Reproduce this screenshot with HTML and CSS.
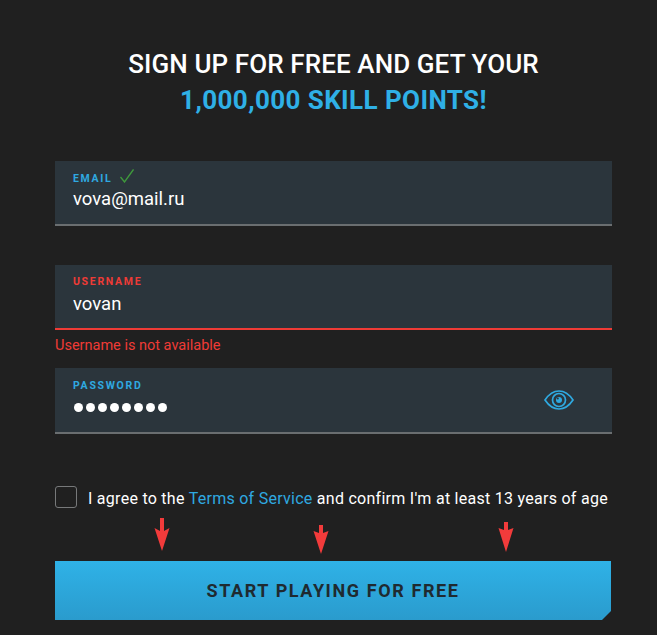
FILE: index.html
```html
<!DOCTYPE html>
<html>

<head>
    <meta name="viewport" content="width=device-width, initial-scale=1.0">
    <link rel="stylesheet" href="styles.css">
</head>

<body>
    <div class="signup">
        <h1 class="title">SIGN UP FOR FREE AND GET YOUR<br><span class="points">1,000,000 SKILL POINTS!</span></h1>

        <div class="field email">
            <div class="label">EMAIL
                <svg class="check" width="14" height="14" viewBox="0 0 14 14">
                    <path d="M.5 8L4.500 13L13.500 .5" fill="none" stroke="#3f9a3c" stroke-width="1.300" />
                </svg>
            </div>
            <div class="value">vova@mail.ru</div>
        </div>

        <div class="field username error">
            <div class="label">USERNAME</div>
            <div class="value">vovan</div>
        </div>
        <div class="message">Username is not available</div>

        <div class="field password">
            <div class="label">PASSWORD</div>
            <div class="dots">
                <span></span><span></span><span></span><span></span><span></span><span></span><span></span><span></span>
            </div>
            <svg class="eye" width="30" height="22" viewBox="0 0 30 22">
                <path d="M1 11C5 5 9.500 2 15 2C20.500 2 25 5 29 11C25 17 20.500 20 15 20C9.500 20 5 17 1 11Z" fill="none"
                    stroke="#2fa9e0" stroke-width="1.700" />
                <circle cx="15" cy="11" r="6.500" fill="none" stroke="#2fa9e0" stroke-width="1.700" />
                <circle cx="15" cy="11" r="3" fill="#2fa9e0" />
                <circle cx="13.800" cy="9.500" r="1" fill="#2b353c" />
            </svg>
        </div>

        <div class="agree">
            <span class="box"></span>
            <span class="agree-text">I agree to the <a class="link">Terms of Service</a> and confirm I'm at least 13 years of age</span>
        </div>

        <div class="submit">
            <svg class="arrow arrow1" width="16" height="33" viewBox="0 0 16 33">
                <path d="M6 0H10V13L15.500 10L8 33L.500 10L6 13Z" fill="#f23b3b" />
            </svg>
            <svg class="arrow arrow2" width="16" height="29" viewBox="0 0 16 29">
                <path d="M6 0H10V8L15.500 6L8 29L.500 6L6 8Z" fill="#f23b3b" />
            </svg>
            <svg class="arrow arrow3" width="16" height="30" viewBox="0 0 16 30">
                <path d="M6 0H10V8L15.500 6L8 30L.500 6L6 8Z" fill="#f23b3b" />
            </svg>
            <button class="button">START PLAYING FOR FREE</button>
        </div>
    </div>
</body>

</html>
```

FILE: styles.css
```css
* {
    box-sizing: border-box;
}

body {
    margin: 0;
    height: 635px;
    overflow: hidden;
    background-color: #202020;
    font-family: Roboto, "Liberation Sans", sans-serif;
}

.signup {
    width: 557px;
    margin-left: 55px;
    padding-top: 46px;
}

.title {
    margin: 0 0 44px 0;
    height: 71px;
    color: #ffffff;
    font-size: 26px;
    font-weight: 500;
    letter-spacing: .1px;
    line-height: 36px;
    text-align: center;
    white-space: nowrap;
}

.points {
    color: #2fb0e6;
    font-weight: 700;
    letter-spacing: .4px;
}

.field {
    position: relative;
    height: 65px;
    padding: 10px 18px 0 18px;
    background-color: #2b353c;
    border-bottom: 2px solid #6a6e70;
}

.email {
    margin-bottom: 39px;
}

.email .value {
    margin-top: 2px;
}

.username {
    margin-bottom: 7px;
    padding-top: 9px;
}

.username .value {
    margin-top: 4px;
}

.password {
    height: 66px;
}

.label {
    display: flex;
    align-items: center;
    gap: 7px;
    height: 14px;
    color: #2fa9e0;
    font-size: 10.500px;
    font-weight: 700;
    letter-spacing: 1.700px;
}

.check {
    margin-top: -5px;
}

.value {
    margin-top: 3px;
    color: #ffffff;
    font-size: 18.500px;
    line-height: 24px;
}

.error {
    border-bottom-color: #ef3b36;
}

.error .label {
    color: #ef3b36;
}

.message {
    height: 31px;
    color: #ef3b36;
    font-size: 14.500px;
    line-height: 17px;
}

.dots {
    display: flex;
    gap: 3px;
    margin-top: 11px;
    margin-left: 1px;
}

.dots span {
    width: 9px;
    height: 9px;
    border-radius: 50%;
    background-color: #ffffff;
}

.eye {
    position: absolute;
    top: 21px;
    left: 489px;
}

.agree {
    display: flex;
    align-items: center;
    gap: 11px;
    margin-top: 52px;
    color: #ffffff;
    font-size: 16px;
    letter-spacing: .27px;
    white-space: nowrap;
}

.agree-text {
    padding-top: 2px;
}

.box {
    width: 22px;
    height: 22px;
    border: 1px solid #77797a;
    border-radius: 3px;
}

.link {
    color: #2fa9e0;
}

.submit {
    position: relative;
    margin-top: 53px;
}

.arrow {
    position: absolute;
}

.arrow1 {
    left: 99px;
    top: -43px;
}

.arrow2 {
    left: 258px;
    top: -36px;
}

.arrow3 {
    left: 443px;
    top: -39px;
}

.button {
    display: block;
    width: 556px;
    height: 59px;
    border: 0;
    background: linear-gradient(#2fb2e7, #2a9bcd);
    clip-path: polygon(0 0, 100% 0, 100% 50px, 547px 100%, 0 100%);
    color: #1f2a30;
    font-family: Roboto, "Liberation Sans", sans-serif;
    font-size: 18px;
    font-weight: 700;
    letter-spacing: 1.600px;
}
```
